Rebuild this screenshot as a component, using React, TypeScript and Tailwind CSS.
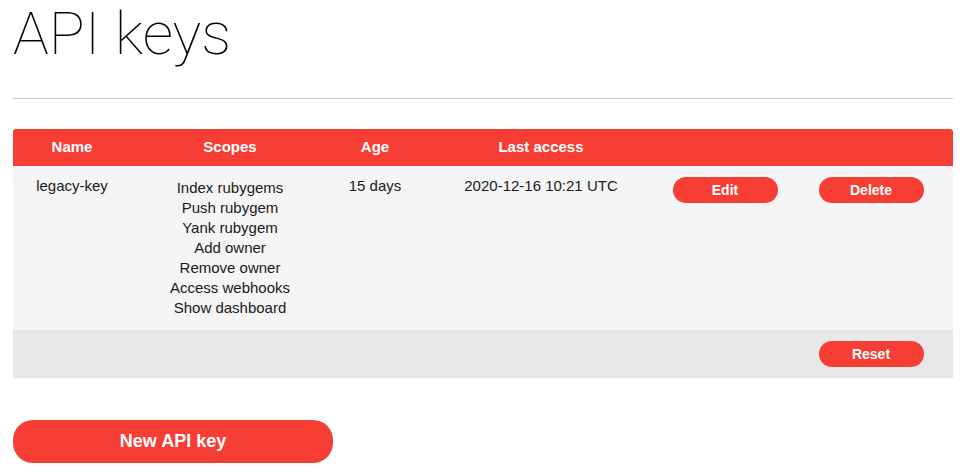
const scopes = [
  "Index rubygems",
  "Push rubygem",
  "Yank rubygem",
  "Add owner",
  "Remove owner",
  "Access webhooks",
  "Show dashboard",
]

function PillButton({ label }: { label: string }) {
  return (
    <button className="h-[26px] w-[105px] rounded-full bg-[#f63e35] text-[14px] font-bold text-white">
      {label}
    </button>
  )
}

export default function App() {
  return (
    <div className="min-h-[475px] bg-white px-[13px] font-['Liberation_Sans',Arial,sans-serif] text-[15px] text-[#1a1a1a]">
      <h1 className="font-['Roboto',sans-serif] text-[60px] font-thin leading-[68px] text-black">
        API keys
      </h1>
      <hr className="mt-[30px] border-t border-[#c8c8cf]" />

      <div className="mt-[30px] w-[940px]">
        <div className="grid h-[37px] grid-cols-[118px_198px_92px_240px_128px_164px] items-center rounded-t-[3px] bg-[#f63e35] font-bold text-white">
          <div className="text-center">Name</div>
          <div className="text-center">Scopes</div>
          <div className="text-center">Age</div>
          <div className="text-center">Last access</div>
          <div />
          <div />
        </div>

        <div className="grid grid-cols-[118px_198px_92px_240px_128px_164px] bg-[#f5f5f5] pb-[12px] leading-[20px]">
          <div className="pt-[10px] text-center">legacy-key</div>
          <ul className="pt-[12px] text-center">
            {scopes.map((s) => (
              <li key={s}>{s}</li>
            ))}
          </ul>
          <div className="pt-[10px] text-center">15 days</div>
          <div className="pt-[10px] text-center">2020-12-16 10:21 UTC</div>
          <div className="flex justify-center pt-[11px]">
            <PillButton label="Edit" />
          </div>
          <div className="flex justify-center pt-[11px]">
            <PillButton label="Delete" />
          </div>
        </div>

        <div className="grid h-[48px] grid-cols-[776px_164px] items-center border-t border-[#e1e1e1] border-b border-b-[#e1e1e1] bg-[#e8e8e8]">
          <div />
          <div className="flex justify-center">
            <PillButton label="Reset" />
          </div>
        </div>
      </div>

      <button className="mt-[42px] h-[43px] w-[320px] rounded-[20px] bg-[#f63e35] text-[18px] font-bold text-white">
        New API key
      </button>
    </div>
  )
}
